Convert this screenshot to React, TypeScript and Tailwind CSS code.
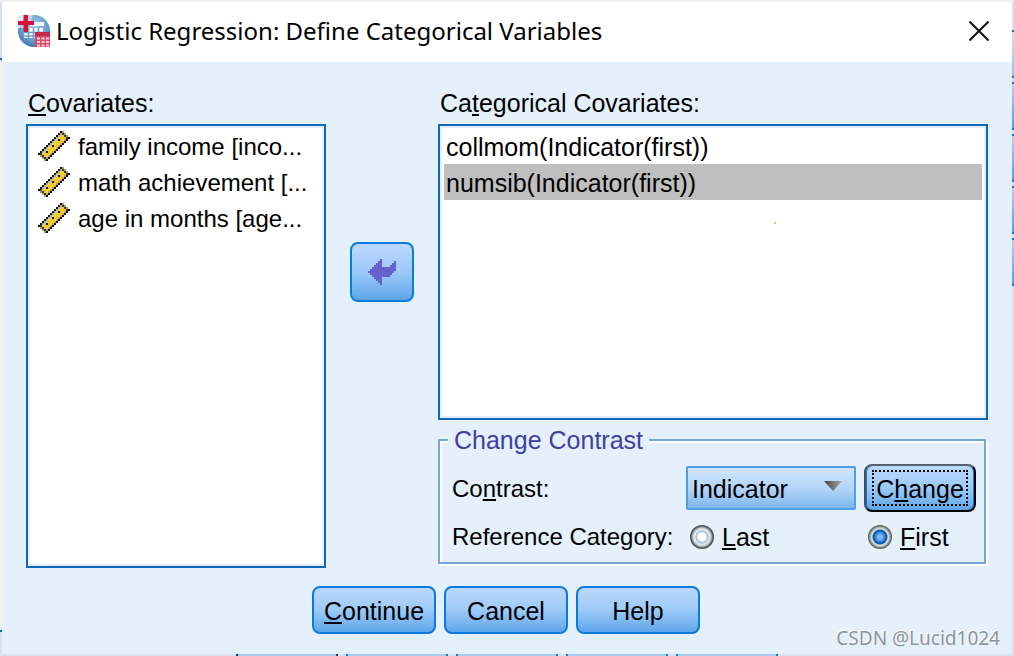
import React, { useState } from "react";

const covariates = ["family income [inco...", "math achievement [...", "age in months [age..."];
const categorical = ["collmom(Indicator(first))", "numsib(Indicator(first))"];

function RulerIcon() {
  const cells: React.ReactNode[] = [];
  for (let y = 0; y < 15; y++) {
    for (let x = 0; x < 16; x++) {
      const s = x + y;
      const d = x - y;
      if (s < 11 || s > 18 || d < -11 || d > 12) continue;
      let fill = "#ffcc00";
      if (s === 11) fill = "#14140c";
      else if (s === 18) fill = "#000000";
      else if (d <= -10 || d >= 11) fill = d === -11 || d === 12 ? "#9b9d7c" : "#3a3a28";
      else if (s === 12) fill = "#b4b58c";
      else if (s === 13) fill = "#d2d3a0";
      else if (s === 14) fill = d % 6 === 0 ? "#1c1808" : "#ffcc00";
      else if (s === 16) fill = d % 4 === 0 ? "#f7c79a" : "#ffcc00";
      else if (s === 17) fill = "#c0a552";
      cells.push(<rect key={`${x}-${y}`} x={x} y={y} width="1" height="1" fill={fill} />);
    }
  }
  return (
    <svg viewBox="0 0 16 15" className="h-[30px] w-8 shrink-0" shapeRendering="crispEdges" aria-hidden="true">
      {cells}
    </svg>
  );
}

function AppIcon() {
  return (
    <svg viewBox="0 0 32 32" className="size-8 shrink-0" aria-hidden="true">
      <defs>
        <radialGradient id="globe" cx="0.5" cy="0.35" r="0.7">
          <stop offset="0" stopColor="#a9cde8" />
          <stop offset="0.6" stopColor="#6a9fcc" />
          <stop offset="1" stopColor="#2f6ba5" />
        </radialGradient>
      </defs>
      <circle cx="16" cy="16" r="16" fill="url(#globe)" />
      <path d="M0 0H15L13 6L6 13L0 13Z" fill="#dbe7f3" opacity="0.7" />
      <path d="M12 7H26V11H12ZM6 13H25V23H6Z" fill="#f4f8fc" />
      <path d="M6 17.500H25M6 21H22M10.500 13V23M15.500 13V23M20.500 13V23" stroke="#6f9fcc" strokeWidth="1.500" />
      <path d="M5.500 0H10V6H16V10H10V17H5.500V10H0V6H5.500Z" fill="#d3123f" />
      <path d="M17 17H32V32H17Z" fill="#d9486a" />
      <path d="M17 17H32V21H17Z" fill="#c9274b" />
      <path d="M19 22.500h3v2h-3zM23.500 22.500h3v2h-3zM28 22.500h3v2h-3zM19 26h3v2h-3zM23.500 26h3v2h-3zM28 26h3v2h-3zM19 29.500h3v2h-3zM23.500 29.500h3v2h-3zM28 29.500h3v2h-3z" fill="#f8cfd8" />
    </svg>
  );
}

const buttonFace =
  "rounded-lg border-2 border-[#0a7bdc] bg-linear-to-b from-[#bbd8fc] via-[#9ccafa] to-[#5ea5e8]";

const listFace = "border-2 border-[#0f68b8] bg-white p-0.5 shadow-[inset_0_0_0_2px_#e4f0fb]";

const radioFace =
  "size-6 shrink-0 appearance-none rounded-full bg-[radial-gradient(circle,#ffffff_4px,#8fb8e0_6px,#e8f0f4_7px,#c3cfcc_9px,#8d9492_10px,#4c5250_11px,#4c5250_12px)] checked:bg-[radial-gradient(circle,#7db8f5_2px,#4c94e0_4px,#0d5fb4_6px,#0d5fb4_7px,#dbe6e4_8px,#c3cfcc_9px,#6d7472_11px,#4c5250_12px)]";

function Key({ children }: { children: React.ReactNode }) {
  return <span className="underline decoration-2 underline-offset-2 [text-decoration-skip-ink:none]">{children}</span>;
}

export default function App() {
  const [selected, setSelected] = useState(1);
  return (
    <div className="relative grid min-h-screen grid-cols-[2px_1fr_2px] grid-rows-[2px_1fr_2px] bg-[#d6e2ef] font-['Liberation_Sans',Arial,sans-serif] text-[25px] leading-8 text-black">
      <div className="col-span-3 bg-[#f0f0f0]" />
      <div className="flex flex-col">
        <div className="h-14 bg-[#d6e2ef]" />
        <div className="h-0.5 bg-[#0f68b8]" />
        <div className="mt-0.5 flex-1 bg-[#f0f0f0]" />
        <div className="mt-0.5 h-0.5 bg-[#0f68b8]" />
        <div className="h-[22px]" />
      </div>

      <main className="flex flex-col bg-[#e4f0fb]">
        <header className="flex h-15 items-center justify-between bg-white pr-[21px] pb-0.5 pl-4 font-['Noto_Sans','Open_Sans',sans-serif]">
          <div className="flex items-center gap-1.5">
            <AppIcon />
            <h1 className="text-2xl leading-8">Logistic Regression: Define Categorical Variables</h1>
          </div>
          <button aria-label="Close" className="flex size-6 items-center justify-center">
            <svg viewBox="0 0 20 20" className="size-5" aria-hidden="true">
              <path d="M0.500 0.500L19.500 19.500M19.500 0.500L0.500 19.500" stroke="#111" strokeWidth="2" />
            </svg>
          </button>
        </header>

        <div className="flex gap-6 px-6 pt-[25px]">
          <section className="flex w-75 flex-col">
            <h2 id="covariates" className="mb-[5px] pl-0.5"><Key>C</Key>ovariates:</h2>
            <ul role="listbox" aria-labelledby="covariates" className={`flex-1 text-2xl ${listFace}`}>
              {covariates.map((name) => (
                <li key={name} role="option" aria-selected={false} className="flex h-9 items-center gap-2 px-2">
                  <RulerIcon />
                  <span className="pt-0.5 whitespace-nowrap">{name}</span>
                </li>
              ))}
            </ul>
          </section>

          <button aria-label="Move variable" className={`mt-[155px] flex h-15 w-16 shrink-0 items-center justify-center ${buttonFace}`}>
            <svg viewBox="0 0 14 13" className="h-[26px] w-7" shapeRendering="crispEdges" aria-hidden="true">
              <path d="M0 6h1v-1h1v-1h1v-1h1v-1h1v-1h1v-1h1v4h4v-1h1v-1h1v-1h1v5h-1v1h-1v1h-1v1h-4v4h-1v-1h-1v-1h-1v-1h-1v-1h-1v-1h-1v-1h-1z" fill="#6660d0" />
            </svg>
          </button>

          <section className="flex min-w-0 flex-1 flex-col pb-1">
            <h2 id="categorical" className="mb-[5px] pl-0.5">Ca<Key>t</Key>egorical Covariates:</h2>
            <ul role="listbox" aria-labelledby="categorical" className={`relative h-74 ${listFace}`}>
              {categorical.map((name, i) => (
                <li
                  key={name}
                  role="option"
                  aria-selected={i === selected}
                  onClick={() => setSelected(i)}
                  className="mx-0.5 flex h-9 items-center px-0.5 pt-0.5 aria-selected:bg-[#bfbfbf]"
                >
                  {name}
                </li>
              ))}
              <li role="presentation" className="absolute top-24 left-[334px] size-0.5 bg-[#fcc860]" />
            </ul>

            <fieldset className="mt-1.5 mr-0.5 border-2 border-[#78a4d6] pr-2 pb-[9px] pl-3 shadow-[inset_2px_2px_0_#fff,2px_2px_0_#fff]">
              <legend className="-ml-1 bg-[#e4f0fb] px-1.5 leading-7 text-[#3f3fa5]">Change Contrast</legend>
              <div className="mt-2.5 flex items-center">
                <label htmlFor="contrast" className="flex-1 pt-0.5 text-2xl leading-8">Co<Key>n</Key>trast:</label>
                <div className="mr-2 grid w-[170px] items-center">
                  <select
                    id="contrast"
                    className="col-start-1 row-start-1 h-11 w-full appearance-none rounded-xs border-2 border-[#4ca0ee] bg-linear-to-b from-[#d3e5fb] via-[#b4d5f8] to-[#7fb7ee] pt-0.5 pl-1"
                  >
                    <option>Indicator</option>
                    <option>Simple</option>
                    <option>Difference</option>
                  </select>
                  <svg viewBox="0 0 18 10" className="pointer-events-none col-start-1 row-start-1 mr-3.5 mb-1 h-2.5 w-[18px] justify-self-end" aria-hidden="true">
                    <defs>
                      <linearGradient id="arrow" x1="0" x2="1">
                        <stop offset="0" stopColor="#444" />
                        <stop offset="1" stopColor="#a8a8a8" />
                      </linearGradient>
                    </defs>
                    <path d="M0 0H18L9 10Z" fill="url(#arrow)" />
                  </svg>
                </div>
                <button className="h-12 w-28 rounded-lg border-2 border-t-[#5c6068] border-r-black border-b-black border-l-[#40505f] bg-linear-to-b from-[#bbd8fc] via-[#9ccafa] to-[#5ea5e8] px-1.5 py-1 shadow-[inset_1px_0_0_#0a7bdc,inset_-1px_0_0_#0a7bdc]">
                  <span className="flex h-9 items-center justify-center border-2 border-dotted border-black pt-0.5">
                    <span>C<Key>h</Key>ange</span>
                  </span>
                </button>
              </div>
              <div className="mt-[9px] flex items-center" role="radiogroup" aria-label="Reference Category">
                <span className="flex-1 text-2xl leading-8 whitespace-nowrap">Reference Category:</span>
                <label className="flex w-[178px] items-center gap-2">
                  <input type="radio" name="reference" className={radioFace} />
                  <span><Key>L</Key>ast</span>
                </label>
                <label className="flex w-[108px] items-center gap-2">
                  <input type="radio" name="reference" defaultChecked className={radioFace} />
                  <span><Key>F</Key>irst</span>
                </label>
              </div>
            </fieldset>
          </section>
        </div>

        <footer className="flex justify-center gap-2 pt-[18px] pr-0.5 pb-5">
          <button className={`h-12 w-31 pt-0.5 ${buttonFace}`}><Key>C</Key>ontinue</button>
          <button className={`h-12 w-31 pt-0.5 ${buttonFace}`}>Cancel</button>
          <button className={`h-12 w-31 pt-0.5 ${buttonFace}`}>Help</button>
        </footer>
      </main>

      <div className="flex flex-col gap-1">
        <div className="mt-7 h-12 border-y-2 border-[#0a7bdc] bg-linear-to-b from-[#d3e3f6] to-[#8fbdec]" />
        <div className="h-12 border-y-2 border-[#0a7bdc] bg-linear-to-b from-[#b5d2f5] to-[#559bdf]" />
        <div className="h-12 border-y-2 border-[#0a7bdc] bg-linear-to-b from-[#b5d2f5] to-[#559bdf]" />
        <div className="h-12 border-y-2 border-[#0a7bdc] bg-linear-to-b from-[#b5d2f5] to-[#559bdf]" />
        <div className="h-12 border-y-2 border-[#0a7bdc] bg-linear-to-b from-[#b5d2f5] to-[#559bdf]" />
      </div>

      <div className="col-span-3 flex gap-2 pl-[236px]">
        <div className="w-[102px] border-x-2 border-[#1c3f66] bg-[#a9cbee]" />
        <div className="w-[102px] border-x-2 border-[#0a7bdc] bg-[#a9cbee]" />
        <div className="w-[102px] border-x-2 border-[#0a7bdc] bg-[#a9cbee]" />
        <div className="w-[102px] border-x-2 border-[#0a7bdc] bg-[#a9cbee]" />
        <div className="w-[102px] border-x-2 border-[#0a7bdc] bg-[#a9cbee]" />
      </div>

      <p className="absolute right-3.5 bottom-1.5 font-['Noto_Sans',sans-serif] text-[19px] leading-6 text-[#8d949c] [text-shadow:-1px_-1px_0_#fff]">CSDN @Lucid1024</p>
    </div>
  );
}
